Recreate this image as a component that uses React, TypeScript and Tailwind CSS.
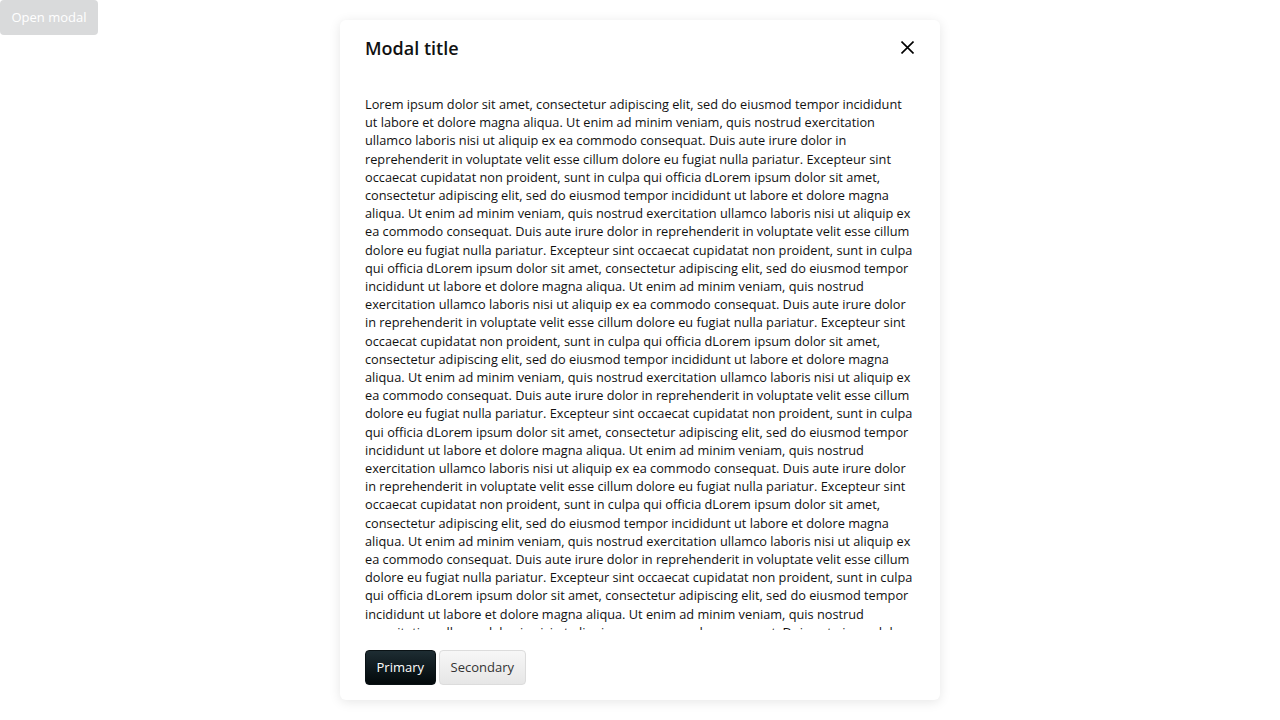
const chunk =
  "Lorem ipsum dolor sit amet, consectetur adipiscing elit, sed do eiusmod tempor incididunt ut labore et dolore magna aliqua. Ut enim ad minim veniam, quis nostrud exercitation ullamco laboris nisi ut aliquip ex ea commodo consequat. Duis aute irure dolor in reprehenderit in voluptate velit esse cillum dolore eu fugiat nulla pariatur. Excepteur sint occaecat cupidatat non proident, sunt in culpa qui officia d";

const body = Array(10).fill(chunk).join("");

function CloseIcon() {
  return (
    <svg width="13" height="13" viewBox="0 0 13 13" fill="none">
      <path d="M0.5 0.5L12.5 12.5M12.5 0.5L0.5 12.5" stroke="#000" strokeWidth="1.6" />
    </svg>
  );
}

export default function App() {
  return (
    <div
      className="relative h-[720px] w-[1280px] bg-white"
      style={{ fontFamily: '"Open Sans", "Noto Sans", sans-serif' }}
    >
      <button className="absolute left-0 top-0 h-[35px] w-[98px] rounded-[4px] bg-[#d9dadb] text-[13px] text-white">
        Open modal
      </button>

      <div className="flex justify-center pt-[20px]">
        <div className="flex h-[680px] w-[600px] flex-col rounded-[6px] bg-white shadow-[0_2px_12px_rgba(0,0,0,0.1)]">
          <div className="flex items-center justify-between px-[25px] pb-[16px] pt-[16px]">
            <h2 className="text-[18px] font-semibold leading-[24px] text-[#111]">
              Modal title
            </h2>
            <button className="-mr-[4px] -mt-[1px] flex h-[24px] w-[24px] items-center justify-center">
              <CloseIcon />
            </button>
          </div>

          <div className="min-h-0 flex-1 overflow-hidden px-[25px] pt-[19px]">
            <p className="break-words text-[12.75px] leading-[18.2px] text-[#111]">
              {body}
            </p>
          </div>

          <div className="flex gap-[3px] px-[25px] pb-[15px] pt-[20px]">
            <button className="h-[35px] rounded-[4px] border border-[#0a1215] bg-gradient-to-b from-[#1e2d33] to-[#04090b] px-[10.5px] text-[13px] text-white">
              Primary
            </button>
            <button className="h-[35px] rounded-[4px] border border-[#dcdcdc] bg-gradient-to-b from-[#f7f7f7] to-[#e6e6e6] px-[11px] text-[13px] text-[#333]">
              Secondary
            </button>
          </div>
        </div>
      </div>
    </div>
  );
}
